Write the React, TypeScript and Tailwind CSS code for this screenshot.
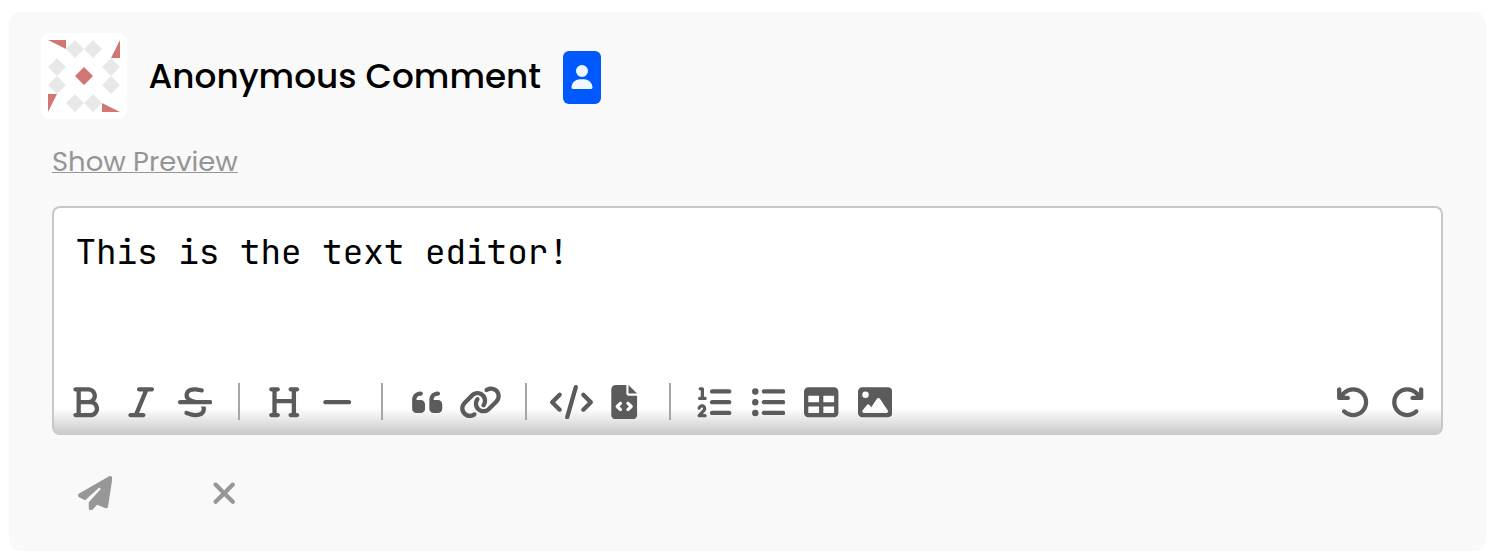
import React from "react";
import {
  FaArrowRotateLeft,
  FaArrowRotateRight,
  FaBold,
  FaCode,
  FaFileCode,
  FaHeading,
  FaImage,
  FaItalic,
  FaLink,
  FaListOl,
  FaListUl,
  FaMinus,
  FaPaperPlane,
  FaQuoteLeft,
  FaStrikethrough,
  FaTable,
  FaUser,
  FaXmark,
} from "react-icons/fa6";
import type { IconType } from "react-icons";

type Tool = { label: string; icon: IconType; wide?: boolean };

const toolGroups: Tool[][] = [
  [
    { label: "Bold", icon: FaBold },
    { label: "Italic", icon: FaItalic },
    { label: "Strikethrough", icon: FaStrikethrough },
  ],
  [
    { label: "Heading", icon: FaHeading },
    { label: "Horizontal rule", icon: FaMinus },
  ],
  [
    { label: "Quote", icon: FaQuoteLeft },
    { label: "Link", icon: FaLink, wide: true },
  ],
  [
    { label: "Inline code", icon: FaCode, wide: true },
    { label: "Code block", icon: FaFileCode },
  ],
  [
    { label: "Numbered list", icon: FaListOl },
    { label: "Bulleted list", icon: FaListUl },
    { label: "Table", icon: FaTable },
    { label: "Image", icon: FaImage },
  ],
];

const history: Tool[] = [
  { label: "Undo", icon: FaArrowRotateLeft },
  { label: "Redo", icon: FaArrowRotateRight },
];

function ToolButton({ label, icon: Icon, wide }: Tool) {
  return (
    <button
      aria-label={label}
      className="flex h-9 w-[53.5px] shrink-0 items-center justify-center"
    >
      <Icon className={wide ? "h-[34.4px] w-[43px] shrink-0" : "h-[34.4px] w-[34.4px] shrink-0"} />
    </button>
  );
}

function Identicon() {
  return (
    <svg viewBox="0 0 72 72" className="size-[72px]">
      <g fill="#e8e8e8">
        <path d="M27 0l9 9-9 9-9-9zM45 0l9 9-9 9-9-9z" />
        <path d="M27 54l9 9-9 9-9-9zM45 54l9 9-9 9-9-9z" />
        <path d="M9 18l9 9-9 9-9-9zM9 36l9 9-9 9-9-9z" />
        <path d="M63 18l9 9-9 9-9-9zM63 36l9 9-9 9-9-9z" />
      </g>
      <path
        fill="#d17575"
        d="M36 27l9 9-9 9-9-9zM0 0h18v9zM72 0v18h-9zM72 72H54v-9zM0 72V54h9z"
      />
    </svg>
  );
}

export default function App() {
  return (
    <div className="h-[560px] bg-white pt-3 pr-[10px] pl-[9px] font-['Poppins','Inter',sans-serif]">
      <section className="flex h-[539px] flex-col rounded-xl bg-[#f9f9f9] pt-[21px] pr-[43px] pl-8">
        <header className="flex h-[86px] items-center">
          <div className="flex size-[86px] shrink-0 items-center justify-center rounded-lg bg-white">
            <Identicon />
          </div>
          <h1 className="ml-[21.5px] w-[392.5px] text-[34.25px] leading-[50px] font-medium whitespace-nowrap text-black">
            Anonymous Comment
          </h1>
          <span className="mt-[3px] ml-[22px] flex h-[53px] w-[38px] items-center justify-center rounded-md bg-[#0059ff] text-[#f0f8ff]">
            <FaUser className="mr-[0.8px] mb-[1.5px] h-6 w-6 shrink-0" />
          </span>
        </header>

        <div className="mt-[22px] mb-px ml-[11px] flex h-10 items-center">
          <a className="text-[27.45px] leading-[31px] whitespace-nowrap text-[#959595] underline decoration-1">
            Show Preview
          </a>
        </div>

        <div className="mt-6 ml-[11px] flex h-[229px] shrink-0 flex-col overflow-hidden rounded-lg border-2 border-b-0 border-[#c8c8c8] bg-white bg-[linear-gradient(to_bottom,transparent_200px,#c8c8c8_227px)]">
          <p className="mt-[22px] ml-[21.4px] h-11 font-['JetBrains_Mono','DejaVu_Sans_Mono',monospace] text-[34.28px] leading-[44px] whitespace-pre text-black">
            This is the text editor!
          </p>
          <div className="mt-[110px] flex h-9 items-center pr-[6.9px] pl-[5.9px] text-[#5b5b5b]">
            {toolGroups.map((group, index) => (
              <React.Fragment key={group[0].label}>
                {index > 0 && (
                  <span className="mx-[17.3px] mb-[2px] h-[37px] w-[2px] shrink-0 bg-[#a6a6a6]" />
                )}
                <div className={index === 0 ? "-mr-[1.5px] flex gap-[0.8px]" : "flex"}>
                  {group.map((tool) => (
                    <ToolButton key={tool.label} {...tool} />
                  ))}
                </div>
              </React.Fragment>
            ))}
            <div className="ml-auto flex gap-[0.5px]">
              {history.map((tool) => (
                <ToolButton key={tool.label} {...tool} />
              ))}
            </div>
          </div>
        </div>

        <footer className="mt-10 ml-[37px] flex h-9 items-center text-[#979797]">
          <button aria-label="Send">
            <FaPaperPlane className="size-[34.4px]" />
          </button>
          <button aria-label="Cancel" className="ml-[94.5px]">
            <FaXmark className="size-[34.4px]" />
          </button>
        </footer>
      </section>
    </div>
  );
}
